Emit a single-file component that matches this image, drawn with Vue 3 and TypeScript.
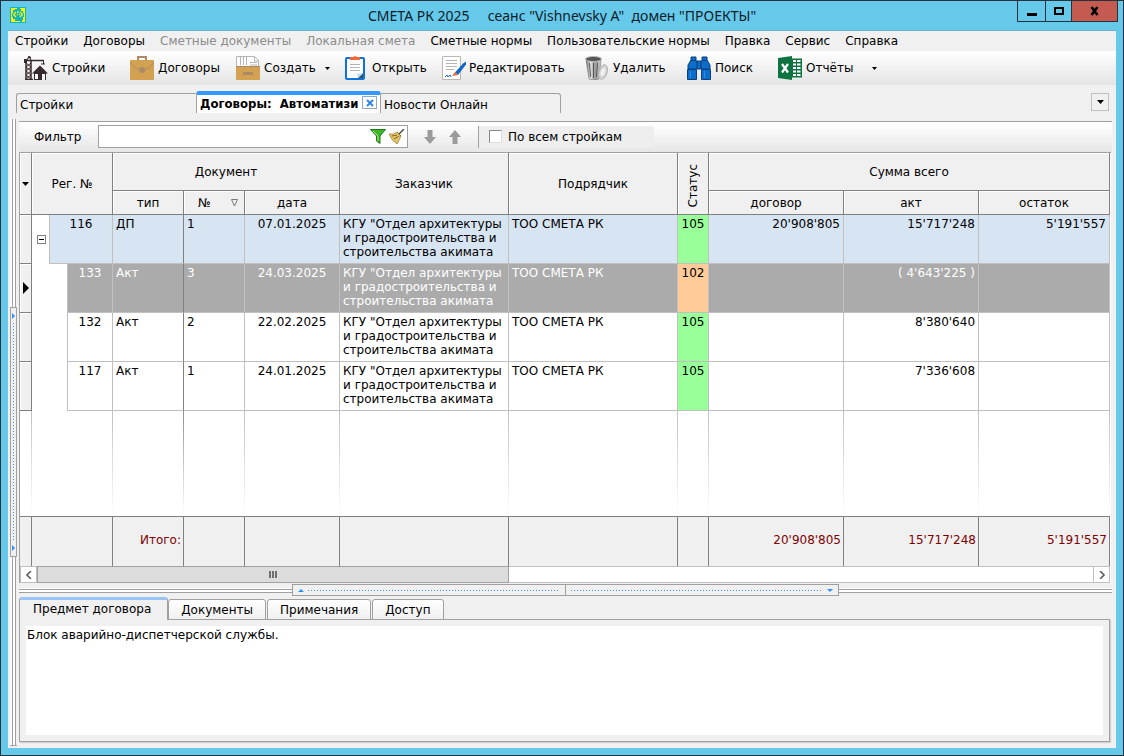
<script setup lang="ts">
import { ref } from 'vue'

interface MenuItem { label: string; disabled?: boolean }
interface Row {
  level: number
  reg: string
  type: string
  num: string
  date: string
  customer: string
  contractor: string
  status: string
  contract: string
  act: string
  rest: string
}

const menu: MenuItem[] = [
  { label: 'Стройки' },
  { label: 'Договоры' },
  { label: 'Сметные документы', disabled: true },
  { label: 'Локальная смета', disabled: true },
  { label: 'Сметные нормы' },
  { label: 'Пользовательские нормы' },
  { label: 'Правка' },
  { label: 'Сервис' },
  { label: 'Справка' },
]

const customer = 'КГУ "Отдел архитектуры\nи градостроительства и\nстроительства акимата'
const contractor = 'ТОО СМЕТА РК'

const rows: Row[] = [
  { level: 0, reg: '116', type: 'ДП', num: '1', date: '07.01.2025', customer, contractor, status: '105', contract: "20'908'805", act: "15'717'248", rest: "5'191'557" },
  { level: 1, reg: '133', type: 'Акт', num: '3', date: '24.03.2025', customer, contractor, status: '102', contract: '', act: "( 4'643'225 )", rest: '' },
  { level: 1, reg: '132', type: 'Акт', num: '2', date: '22.02.2025', customer, contractor, status: '105', contract: '', act: "8'380'640", rest: '' },
  { level: 1, reg: '117', type: 'Акт', num: '1', date: '24.01.2025', customer, contractor, status: '105', contract: '', act: "7'336'608", rest: '' },
]

const selected = ref('133')
const filter = ref('')
const allSites = ref(false)
const detailTabs = ['Предмет договора', 'Документы', 'Примечания', 'Доступ']
const activeDetail = ref(detailTabs[0])
const subject = ref('Блок аварийно-диспетчерской службы.')
const title = 'СМЕТА РК 2025     сеанс "Vishnevsky A"  домен "ПРОЕКТЫ"'
const activeTab = 'Договоры:  Автоматизи'
</script>

<template>
  <div class="window">
    <header class="titlebar">
      <svg class="app-icon" width="16" height="16" viewBox="0 0 16 16">
        <rect width="16" height="16" fill="#12b5c4" />
        <path d="M1 1h6v1H5v1H3v3H2v4h1v2h2v2h5v1H1zM10 1h5v14h-3v-2h1v-3h1V6h-1V4h-2V2h-1z" fill="#f8f400" />
        <path d="M6 5L3.500 7.500L6 10M10 5l2.500 2.500L10 10M7 7.500h1M9 7.500h1M8 4v2" fill="none" stroke="#f8f400" stroke-width="1.300" />
      </svg>
      <h1>{{ title }}</h1>
      <div class="win-buttons">
        <button class="min" aria-label="Свернуть"><svg width="10" height="12"><rect y="8" width="10" height="3" /></svg></button>
        <button class="max" aria-label="Развернуть"><svg width="10" height="12"><path d="M1 3h8v6H1z" fill="none" stroke="#000" stroke-width="2" /></svg></button>
        <button class="close" aria-label="Закрыть"><svg width="10" height="12"><path d="M1.500 2l6 8M7.500 2l-6 8" stroke="#000" stroke-width="2.600" /></svg></button>
      </div>
    </header>

    <div class="client">
      <nav class="menu">
        <button v-for="m in menu" :key="m.label" :disabled="m.disabled">{{ m.label }}</button>
      </nav>

      <div class="toolbar">
        <button>
          <svg width="24" height="24" viewBox="0 0 24 24">
            <path d="M4 1.500h3M1 4.500h19M2 5v18M7 5v18M1 23.500h8" stroke="#372a2c" stroke-width="1.500" fill="none" />
            <path d="M2 7l5 4-5 4 5 4-5 4M7 7l-5 4 5 4-5 4 5 4M3 4l2-4 2 4M19.500 4v4M17 8h4" stroke="#372a2c" fill="none" />
            <rect x="0" y="3" width="3" height="4" fill="#372a2c" />
            <path d="M8 17.500l8-8 8 8h-2v6.500H10v-6.500z" fill="#372a2c" />
            <path d="M11 18h3v5h-3zM18 18h3v6h-3z" fill="#f5f5f5" />
          </svg>
          Стройки
        </button>
        <button>
          <svg width="24" height="24" viewBox="0 0 24 24">
            <path d="M8 4V1h8v3" fill="none" stroke="#ad8a66" stroke-width="2" />
            <rect y="4" width="24" height="20" rx="1" fill="#d2a152" />
            <path d="M0 6q5 8 12 8t12-8" fill="none" stroke="#ad8a66" />
            <circle cx="12" cy="14" r="3" fill="#ad8a66" />
          </svg>
          Договоры
        </button>
        <button>
          <svg width="24" height="24" viewBox="0 0 24 24">
            <path d="M.5 11V.5h18l4 4V11z" fill="#fff" stroke="#b4b4b4" />
            <path d="M4.500 1v8M7.500 1v8M10.500 1v8M14 6.500h7M14 9h7M18.500 1v4H23" fill="none" stroke="#b4b4b4" />
            <rect y="10" width="24" height="14" rx="1" fill="#d2a152" />
            <path d="M0 10.500h24" stroke="#ad8a66" />
            <rect x="7" y="16" width="10" height="3" fill="#ad8a66" />
          </svg>
          Создать
          <svg class="arrow" width="5" height="3"><path d="M0 0h5L2.500 3z" /></svg>
        </button>
        <button class="open">
          <svg width="20" height="24" viewBox="0 0 20 24">
            <rect x="1" y="2" width="18" height="21" rx="1" fill="#fff" stroke="#0b74d8" stroke-width="2" />
            <path d="M5 1h3l2-1 2 1h3v3H5z" fill="#f0683a" />
            <path d="M5 8.500h10M5 11.500h10M5 14.500h10" stroke="#b4b4b4" />
            <path d="M13 22l5-5v5z" fill="#3b5266" /><path d="M12.500 22v-4.500H18z" fill="#b9dcf5" />
          </svg>
          Открыть
        </button>
        <button class="edit">
          <svg width="25" height="24" viewBox="0 0 25 24">
            <path d="M.5.500h18v23H.5z" fill="#fff" stroke="#bcb7b4" />
            <path d="M4 4.500h11M4 7.500h11M4 10.500h11M4 13.500h8" stroke="#b4b4b4" />
            <path d="M13 16.500l8-9 3-2v3L16 19z" fill="#1068c8" /><path d="M10 20l3-4 3 3z" fill="#f0683a" />
            <path d="M3 21l2-2 1 2 2-2 1 2" fill="none" stroke="#1068c8" />
          </svg>
          Редактировать
        </button>
        <button>
          <svg width="24" height="24" viewBox="0 0 24 24">
            <defs><linearGradient id="steel"><stop stop-color="#666" /><stop offset=".3" stop-color="#e4e4e4" /><stop offset=".6" stop-color="#999" /><stop offset="1" stop-color="#ccc" /></linearGradient></defs>
            <path d="M1 4h15l-2 19q-5 2-10 0z" fill="url(#steel)" stroke="#777" stroke-width=".600" />
            <path d="M4.500 7l1 14M8.500 7v15M12.500 7l-1 14" stroke="#555" stroke-width="1" />
            <ellipse cx="8.500" cy="3" rx="8" ry="2.500" fill="#555" stroke="#bbb" />
            <ellipse cx="18" cy="16" rx="4" ry="7.500" fill="#d4d4d4" stroke="#b4b4b4" transform="rotate(18 18 16)" />
            <ellipse cx="18" cy="16" rx="2" ry="4" fill="#f2f2f2" transform="rotate(18 18 16)" />
          </svg>
          Удалить
        </button>
        <button>
          <svg width="24" height="24" viewBox="0 0 24 24">
            <g fill="#0b6ecb" stroke="#0a3f80">
              <path d="M10 5h4v8h-4z" />
              <path d="M4 1h5v3l1 3v6H1V9l3-5zM20 1h-5v3l-1 3v6h9V9l-3-5z" />
              <path d="M.5 13.500h9v10h-9zM14.500 13.500h9v10h-9z" />
            </g>
            <path d="M4 4.500h5M15 4.500h5" stroke="#0a3f80" /><path d="M3.500 15v7M17.500 15v7" stroke="#2b8ae2" />
          </svg>
          Поиск
        </button>
        <button>
          <svg width="24" height="24" viewBox="0 0 24 24">
            <path d="M14 2.500h10v19H14z" fill="#0e7340" />
            <path d="M15 4h3v2h-3zM19 4h3.500v2H19zM15 7.500h3v2h-3zM19 7.500h3.500v2H19zM15 11h3v2h-3zM19 11h3.500v2H19zM15 14.500h3v2h-3zM19 14.500h3.500v2H19zM15 18h3v2h-3zM19 18h3.500v2H19z" fill="#fff" />
            <path d="M0 2l14-2v24L0 22z" fill="#0e7340" />
            <path d="M4 8l6 8.500M10 8l-6 8.500" stroke="#fff" stroke-width="2.200" />
          </svg>
          Отчёты
          <svg class="arrow far" width="5" height="3"><path d="M0 0h5L2.500 3z" /></svg>
        </button>
      </div>

      <div class="tabs">
        <button class="tab first">Стройки</button>
        <div class="tab active">
          <button class="tab-label">{{ activeTab }}</button>
          <button class="tab-close" aria-label="Закрыть вкладку">
            <svg width="8" height="8"><path d="M1 1l6 6M7 1l-6 6" stroke="#2f86e0" stroke-width="2" /></svg>
          </button>
        </div>
        <button class="tab last">Новости Онлайн</button>
        <button class="tab-list" aria-label="Список вкладок"><svg width="7" height="4"><path d="M0 0h7L3.500 4z" /></svg></button>
      </div>

      <div class="body">
        <div class="vsplit">
          <div class="handle">
            <svg width="3" height="6"><path d="M0 0l3 3-3 3z" fill="#2f8ff0" /></svg>
            <i class="dots"></i>
            <svg width="3" height="6"><path d="M0 0l3 3-3 3z" fill="#2f8ff0" /></svg>
          </div>
        </div>

        <main class="main">
          <div class="filterbar">
            <label class="filter-label" for="filter">Фильтр</label>
            <div class="filter-box">
              <input id="filter" v-model="filter" type="text" />
              <button aria-label="Применить фильтр">
                <svg width="16" height="15" viewBox="0 0 16 15"><path d="M.5.500h15L10 7v7.500L6.500 12V7z" fill="#3fb52a" stroke="#1f7a16" /><path d="M3 2l5 5v5" stroke="#a8ec8c" fill="none" /></svg>
              </button>
              <button aria-label="Очистить фильтр">
                <svg width="16" height="15" viewBox="0 0 16 15"><path d="M10 5l5-5" stroke="#555" stroke-width="1.600" /><path d="M0 5q5 1 8-2l4 4q-2 4-4 8Q3 12 0 5z" fill="#e3c467" stroke="#a3803a" stroke-width=".800" /><path d="M8 3l4 4M3 7l5-1M5 10l5-3" stroke="#84642c" /></svg>
              </button>
            </div>
            <button class="move" aria-label="Вниз"><svg width="12" height="14"><path d="M3.500 0h5v7H12l-6 7-6-7h3.500z" fill="#9b9b9b" /></svg></button>
            <button class="move" aria-label="Вверх"><svg width="12" height="14"><path d="M3.500 14h5V7H12L6 0 0 7h3.500z" fill="#9b9b9b" /></svg></button>
            <label class="check"><input v-model="allSites" type="checkbox" />По всем стройкам</label>
          </div>

          <div class="grid">
            <table>
              <colgroup>
                <col class="c-ind" /><col class="c-reg" /><col class="c-type" /><col class="c-num" /><col class="c-date" />
                <col class="c-org" /><col class="c-org" /><col class="c-status" /><col class="c-sum" /><col class="c-sum" /><col />
              </colgroup>
              <thead>
                <tr class="h1">
                  <th rowspan="2"><svg width="7" height="4"><path d="M0 0h7L3.500 4z" /></svg></th>
                  <th rowspan="2">Рег. №</th>
                  <th colspan="3">Документ</th>
                  <th rowspan="2">Заказчик</th>
                  <th rowspan="2">Подрядчик</th>
                  <th rowspan="2"><span class="vertical">Статус</span></th>
                  <th colspan="3">Сумма всего</th>
                </tr>
                <tr class="h2">
                  <th>тип</th>
                  <th><span class="sort">№<svg width="7" height="8"><path d="M.5.500h6L3.500 7z" fill="none" stroke="#777" /></svg></span></th>
                  <th>дата</th>
                  <th>договор</th>
                  <th>акт</th>
                  <th>остаток</th>
                </tr>
              </thead>
              <tbody>
                <tr v-for="r in rows" :key="r.reg" class="row" :class="{ parent: r.level === 0, selected: r.reg === selected }" @click="selected = r.reg">
                  <td class="ind"><svg v-if="r.reg === selected" width="6" height="12"><path d="M0 0l6 6-6 6z" /></svg></td>
                  <td class="tree">
                    <div class="tree-in">
                      <span v-if="r.level" class="indent"></span>
                      <button v-else class="expander" aria-label="Свернуть ветку"></button>
                      <span class="reg">{{ r.reg }}</span>
                    </div>
                  </td>
                  <td class="type">{{ r.type }}</td>
                  <td>{{ r.num }}</td>
                  <td class="center">{{ r.date }}</td>
                  <td>{{ r.customer }}</td>
                  <td>{{ r.contractor }}</td>
                  <td class="status" :class="'s' + r.status">{{ r.status }}</td>
                  <td class="sum">{{ r.contract }}</td>
                  <td class="sum">{{ r.act }}</td>
                  <td class="sum">{{ r.rest }}</td>
                </tr>
                <tr class="filler"><td v-for="n in 11" :key="n"></td></tr>
              </tbody>
              <tfoot>
                <tr>
                  <td></td><td></td><td>Итого:</td><td></td><td></td><td></td><td></td><td></td>
                  <td>20'908'805</td><td>15'717'248</td><td>5'191'557</td>
                </tr>
              </tfoot>
            </table>
            <div class="scroll">
              <button aria-label="Влево"><svg width="6" height="8"><path d="M5 0L1 4l4 4" fill="none" stroke="#606060" stroke-width="1.600" /></svg></button>
              <div class="thumb"><i></i><i></i><i></i></div>
              <div class="track"></div>
              <button class="right" aria-label="Вправо"><svg width="6" height="8"><path d="M1 0l4 4-4 4" fill="none" stroke="#606060" stroke-width="1.600" /></svg></button>
            </div>
          </div>

          <div class="hsplit">
            <div class="handle">
              <div class="half"><svg width="6" height="3"><path d="M0 3l3-3 3 3z" fill="#2f8ff0" /></svg><i class="dots"></i></div>
              <div class="half"><i class="dots"></i><svg width="6" height="3"><path d="M0 0l3 3 3-3z" fill="#2f8ff0" /></svg></div>
            </div>
          </div>

          <div class="dtabs">
            <button v-for="t in detailTabs" :key="t" :class="{ on: t === activeDetail }" @click="activeDetail = t">{{ t }}</button>
          </div>
          <div class="panel">
            <textarea v-model="subject" aria-label="Предмет договора"></textarea>
          </div>
        </main>
      </div>
    </div>
  </div>
</template>

<style>
body { margin: 0; }
</style>

<style scoped>
.window, .window * { box-sizing: border-box; }
.window {
  min-height: 100vh;
  display: flex;
  flex-direction: column;
  padding: 0 7px 7px;
  border: 1px solid #28323c;
  background: #66c9ea;
  font: 12px/14px "DejaVu Sans", Verdana, sans-serif;
  color: #000;
}
button {
  font: inherit;
  color: inherit;
  background: none;
  border: 0;
  padding: 0;
  margin: 0;
  white-space: nowrap;
}
svg { display: block; flex: none; }

.titlebar { height: 30px; display: flex; position: relative; justify-content: center; border-bottom: 1px solid #6fb0cc; }
.app-icon { position: absolute; left: 2px; top: 6px; }
h1 { margin: 0; font: 400 14px/30px "Noto Sans", "Open Sans", sans-serif; white-space: pre; color: #10202a; }
.win-buttons { position: absolute; right: -2px; top: 0; display: flex; height: 21px; border: 1px solid #28323c; border-top: 0; }
.win-buttons button { display: flex; align-items: center; justify-content: center; width: 27px; }
.win-buttons .max { border: solid #28323c; border-width: 0 1px; }
.win-buttons .close { width: 45px; background: #c35b51; }

.client { flex: 1; display: flex; flex-direction: column; background: #f0f0f0; }
.menu { display: flex; gap: 1px; height: 20px; }
.menu button { padding: 0 7px; }
.menu button:disabled { color: #8c8c8c; }

.toolbar {
  display: grid;
  grid-template-columns: 106px 106px 106px 100px 143px 102px 91px auto;
  justify-content: start;
  height: 34px;
  padding-left: 16px;
  background: linear-gradient(#fff, #e4e4e4);
}
.toolbar button { display: flex; align-items: center; gap: 4px; }
.toolbar .arrow { margin-left: 5px; }
.toolbar .far { margin-left: 15px; }
.toolbar .open { padding-left: 3px; gap: 7px; }
.toolbar .edit { gap: 2px; }

.tabs { display: flex; align-items: flex-end; height: 28px; padding: 0 7px 0 8px; }
.tab { height: 20px; width: 180px; padding: 3px 3px 0; text-align: left; border: 1px solid #a0a0a0; border-bottom: 0; }
.tab.first { border-right: 0; border-radius: 3px 0 0 0; }
.tab.last { border-left: 0; border-radius: 0 3px 0 0; }
.tab.active { display: flex; align-items: flex-start; width: 185px; height: 22px; padding: 0 3px; background: #fff; border-top: 4px solid #3399ff; border-radius: 3px 3px 0 0; }
.tab-label { flex: 1; min-width: 0; overflow: hidden; text-align: left; white-space: pre; font: 700 13px/18px "DejaVu Sans Condensed", "Noto Sans", sans-serif; }
.tab-close { display: flex; align-items: center; justify-content: center; width: 15px; height: 13px; margin: 1px 0 0 4px; border: 1px solid #8fa8c4; background: #fff; }
.tab-list { display: flex; align-items: center; justify-content: center; width: 18px; height: 18px; margin: 0 0 2px auto; border: 1px solid #c0c0c0; }

.body { flex: 1; display: flex; margin-top: 6px; padding: 0 4px 0 2px; }
.vsplit { position: relative; width: 7px; margin: 0 2px 2px 0; display: flex; align-items: center; background: linear-gradient(90deg, #fff 2px, #a0a0a0 2px 3px, #fff 3px 5px, #a0a0a0 5px 6px, #f0f0f0 6px); border-bottom: 1px solid #a0a0a0; }
.vsplit .handle { width: 7px; height: 40%; display: flex; flex-direction: column; align-items: center; gap: 4px; padding: 5px 0; border: 1px solid #a0a0a0; background: #f0f0f0; }
.vsplit .dots { flex: 1; width: 1px; background: linear-gradient(#3b97f2 1px, transparent 1px) 0 0 / 1px 3px; }

.main { flex: 1; min-width: 0; display: flex; flex-direction: column; margin-top: 2px; border-top: 1px solid #a0a0a0; }
.filterbar { display: flex; align-items: center; height: 30px; padding-bottom: 2px; border-top: 1px solid #fff; background: linear-gradient(#fff, #e6e6e6); }
.filter-label { width: 79px; padding-left: 15px; }
.filter-box { display: flex; align-items: center; gap: 3px; width: 310px; height: 23px; padding-right: 2px; border: 1px solid #a0a0a0; background: #fff; margin-right: 16px; }
.filter-box input { flex: 1; min-width: 0; height: 20px; border: 0; padding: 0 4px; font: inherit; outline: 0; }
.move { margin-right: 13px; }
.check { display: flex; align-items: center; height: 22px; margin-left: 4px; border-left: 1px solid #a0a0a0; padding: 0 32px 0 10px; background: #eeeeee; }
.check input { appearance: none; width: 13px; height: 13px; margin: 0 6px 0 0; background: #fff; border: 1px solid; border-color: #888 #ddd #ddd #888; }

.grid { border: 1px solid #a0a0a0; border-width: 1px 0 0 1px; background: #fff; margin-right: 1px; padding-right: 1px; }
table { width: 100%; table-layout: fixed; border-collapse: separate; border-spacing: 0; }
.c-ind { width: 12px; }
.c-reg { width: 81px; }
.c-type { width: 71px; }
.c-num { width: 61px; }
.c-date { width: 95px; }
.c-org { width: 169px; }
.c-status { width: 31px; }
.c-sum { width: 135px; }
th { font-weight: 400; padding: 0; background: #f0f0f0; border: solid #808080; border-width: 0 1px 1px 0; box-shadow: inset 1px 1px 0 #fff; vertical-align: middle; }
th > svg { margin: 0 auto; }
.h1 { height: 38px; }
.h2 { height: 24px; }
.vertical { writing-mode: vertical-rl; transform: rotate(180deg); display: block; margin: 4px auto 0; }
.sort { display: flex; align-items: center; justify-content: space-between; padding: 0 6px 0 14px; }
.row { height: 49px; background: #fff; }
.row td { vertical-align: top; padding: 2px 3px; border: solid #c0c0c0; border-width: 0 1px 1px 0; overflow: hidden; white-space: pre; }
.row.parent { background: #d7e4f2; }
.row.selected { background: #ababab; color: #fff; }
.row .type { border-right-color: #808080; }
.row .ind { padding: 0 0 0 3px; vertical-align: middle; background: #f0f0f0; border-color: #808080; box-shadow: inset 1px 1px 0 #fff; }
.row .tree { padding: 0; border-bottom: 0; background: #fff; }
.row .center { text-align: center; }
.row .sum { text-align: right; }
.row .status { padding: 2px 0; text-align: center; color: #000; }
.s105 { background: #99ff99; }
.s102 { background: #ffcc99; }
.tree-in { display: flex; height: 49px; align-items: center; }
.indent { width: 35px; }
.expander { width: 9px; height: 9px; margin: 0 3px 0 5px; border: 1px solid #808080; background: linear-gradient(#000, #000) center / 5px 1px no-repeat #fff; }
.reg { flex: 1; align-self: stretch; padding-top: 2px; text-align: center; border: solid #c0c0c0; border-width: 0 0 1px 1px; background: #fff; }
.parent .reg { background: #d7e4f2; }
.selected .reg { background: #ababab; }
.filler td { height: 105px; padding: 0; background: linear-gradient(#c0c0c0, #fff) right / 1px 100% no-repeat; }
.filler td:nth-child(3) { background-image: linear-gradient(#909090, #fff); }
tfoot td { height: 50px; padding: 0 2px 4px; text-align: right; color: #800000; background: #f0f0f0; border: solid #808080; border-width: 1px 1px 0 0; }

.scroll { display: flex; height: 17px; }
.scroll button { display: flex; align-items: center; justify-content: center; width: 17px; border: 1px solid #c0c0c0; background: #fff; }
.thumb { flex: 446 1 0; display: flex; align-items: center; justify-content: center; gap: 1px; border: 1px solid #a0a0a0; background: #dcdcdc; }
.thumb i { width: 2px; height: 7px; background: #707070; }
.track { flex: 554 1 0; border: solid #c0c0c0; border-width: 1px 0; background: #fff; }

.hsplit { display: flex; justify-content: center; height: 13px; margin-top: 1px; background: linear-gradient(#f0f0f0 4px, #fff 4px 5px, #a0a0a0 5px 6px, #fff 6px 8px, #a0a0a0 8px 9px, #f0f0f0 9px); }
.hsplit .handle { display: flex; width: 50%; height: 12px; border: 1px solid #a0a0a0; background: #f0f0f0; }
.half { flex: 1; display: flex; align-items: center; gap: 4px; padding: 0 5px; }
.half + .half { border-left: 1px solid #a0a0a0; }
.half .dots { flex: 1; height: 1px; background: linear-gradient(90deg, #3b97f2 1px, transparent 1px) 0 0 / 3px 1px; }

.dtabs { display: flex; align-items: flex-end; height: 23px; position: relative; margin-bottom: -1px; }
.dtabs button { height: 21px; padding: 0 12px; margin-right: 1px; border: 1px solid #a0a0a0; border-radius: 3px 3px 0 0; background: linear-gradient(#fff, #f0f0f0); }
.dtabs .on { height: 23px; padding: 0 16px 2px 13px; margin-right: 0; border-top: 3px solid #99c4f5; border-bottom: 0; background: #f0f0f0; }
.panel { flex: 1; display: flex; min-height: 80px; margin: 0 2px 6px 0; padding: 6px; border: 1px solid #a0a0a0; box-shadow: 1px 1px 1px #d0d0d0; }
textarea { flex: 1; border: 0; margin: 0; padding: 2px 1px; resize: none; outline: 0; background: #fff; color: #000; font: inherit; }
</style>
